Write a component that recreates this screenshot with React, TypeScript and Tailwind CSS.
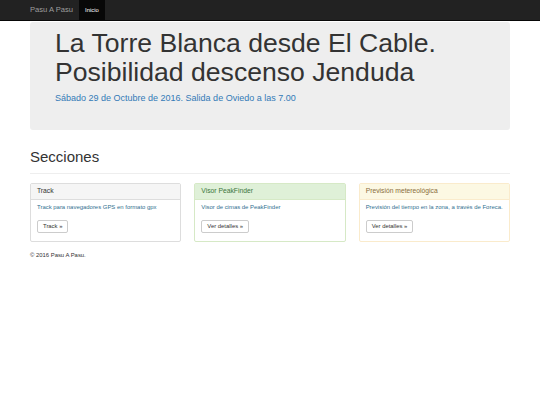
import React from "react";

const font = { fontFamily: '"Liberation Sans", Arial, Helvetica, sans-serif' };

function Panel({
  title,
  text,
  button,
  headBg,
  headText,
  border,
}: {
  title: string;
  text: string;
  button: string;
  headBg: string;
  headText: string;
  border: string;
}) {
  return (
    <div className={`flex-1 rounded-[2px] border bg-white ${border} h-[59px]`}>
      <div className={`h-[16px] flex items-center px-[6px] border-b text-[6.75px] ${headBg} ${headText} ${border}`}>
        {title}
      </div>
      <div className="px-[6px] pt-[3px]">
        <p className="whitespace-nowrap text-[5.95px] leading-[8.4px] text-[#31708f]">{text}</p>
        <div className="mt-[2px] inline-flex h-[12.5px] items-center rounded-[2px] border border-[#ccc] px-[5px] text-[5.9px] text-[#333]">
          {button}
        </div>
      </div>
    </div>
  );
}

export default function App() {
  return (
    <div className="w-[540px] h-[405px] bg-white" style={font}>
      <nav className="h-[21px] bg-[#222] border-b border-[#080808]">
        <div className="flex h-full items-stretch px-[30px]">
          <div className="flex items-center text-[7.6px] text-[#9d9d9d] pr-[6px]">Pasu A Pasu</div>
          <div className="flex items-center bg-[#080808] px-[6px] text-[5.9px] text-white">Inicio</div>
        </div>
      </nav>
      <div className="px-[30px]">
        <div className="mt-[1px] h-[108px] rounded-[3px] bg-[#eee] pl-[25px] pt-[7px]">
          <h1 className="text-[26.6px] leading-[28.5px] text-[#333]">
            La Torre Blanca desde El Cable.
            <br />
            Posibilidad descenso Jenduda
          </h1>
          <p className="mt-[6px] text-[9px] leading-[12px] text-[#337ab7]">
            Sábado 29 de Octubre de 2016. Salida de Oviedo a las 7.00
          </p>
        </div>
        <h2 className="mt-[19px] text-[15px] leading-[16.5px] text-[#333]">Secciones</h2>
        <div className="mt-[7px] border-t border-[#eee]" />
        <div className="mt-[9px] flex gap-[13px]">
          <Panel
            title="Track"
            text="Track para navegadores GPS en formato gpx"
            button="Track »"
            headBg="bg-[#f5f5f5]"
            headText="text-[#333]"
            border="border-[#ddd]"
          />
          <Panel
            title="Visor PeakFinder"
            text="Visor de cimas de PeakFinder"
            button="Ver detalles »"
            headBg="bg-[#dff0d8]"
            headText="text-[#3c763d]"
            border="border-[#d6e9c6]"
          />
          <Panel
            title="Previsión metereológica"
            text="Previsión del tiempo en la zona, a través de Foreca."
            button="Ver detalles »"
            headBg="bg-[#fcf8e3]"
            headText="text-[#8a6d3b]"
            border="border-[#faebcc]"
          />
        </div>
        <p className="mt-[9px] text-[5.9px] text-[#333]">© 2016 Pasu A Pasu.</p>
      </div>
    </div>
  );
}
